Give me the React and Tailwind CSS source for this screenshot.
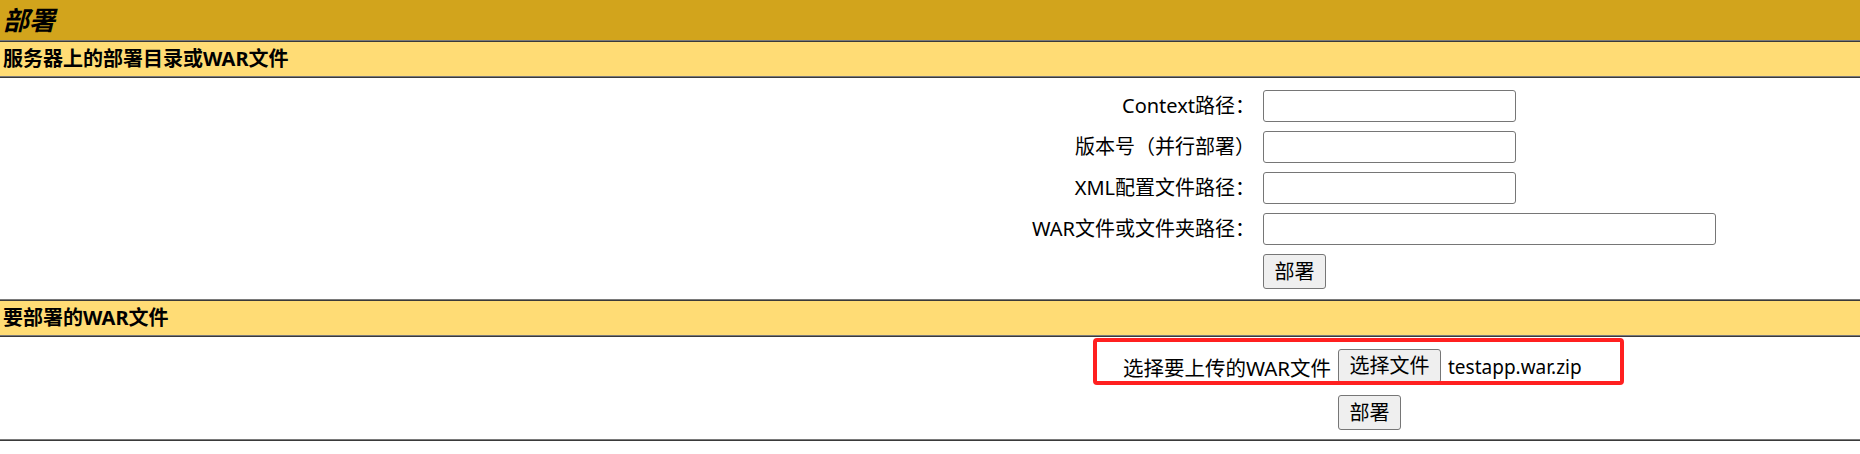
import React from "react";

const Line = () => (
  <div className="h-0 border-t border-b border-t-[#7a7a7a] border-b-[#3a3a3a]" />
);

const Input = ({ w }) => (
  <div
    className={`h-[32px] ${w} bg-white border border-[#767676] rounded-[3px]`}
  />
);

const Btn = ({ children, cls = "" }) => (
  <div
    className={`h-[35px] px-[4px] whitespace-nowrap flex items-center justify-center bg-[#efefef] border border-[#767676] rounded-[3px] text-[20px] leading-none ${cls}`}
  >
    {children}
  </div>
);

export default function App() {
  const labels = [
    ["Context路径：", "w-[253px]"],
    ["版本号（并行部署）", "w-[253px]"],
    ["XML配置文件路径：", "w-[253px]"],
    ["WAR文件或文件夹路径：", "w-[453px]"],
  ];
  return (
    <div className="w-[1860px] h-[454px] bg-white text-black font-['Noto_Sans','Noto_Sans_CJK_SC',sans-serif]">
      <div className="h-[40px] bg-[#D2A41C] flex items-center pl-[3px]">
        <span className="text-[26px] font-bold italic leading-none">部署</span>
      </div>
      <Line />
      <div className="h-[34px] bg-[#FFDC75] flex items-center pl-[3px]">
        <span className="text-[20px] font-bold leading-none">
          服务器上的部署目录或WAR文件
        </span>
      </div>
      <Line />
      <div className="pt-[12px] pb-[10px]">
        <div className="grid grid-cols-[1255px_auto] gap-x-[8px] gap-y-[9px] items-center">
          {labels.map(([t, w]) => (
            <React.Fragment key={t}>
              <div className="text-right text-[20px] leading-none">{t}</div>
              <div>
                <Input w={w} />
              </div>
            </React.Fragment>
          ))}
          <div />
          <div className="flex">
            <Btn cls="w-[63px]">部署</Btn>
          </div>
        </div>
      </div>
      <Line />
      <div className="h-[34px] bg-[#FFDC75] flex items-center pl-[3px]">
        <span className="text-[20px] font-bold leading-none">要部署的WAR文件</span>
      </div>
      <Line />
      <div className="relative pt-[12px] pb-[9px]">
        <div className="grid grid-cols-[1331px_auto] gap-x-[7px] gap-y-[12px] items-center">
          <div className="text-right text-[20.5px] leading-none pt-[4px]">
            选择要上传的WAR文件
          </div>
          <div className="flex items-center gap-[7px]">
            <div className="h-[34px] w-[103px] flex items-center justify-center bg-[#efefef] border border-[#767676] rounded-[3px] text-[20px] leading-none whitespace-nowrap">
              选择文件
            </div>
            <span className="text-[19px] leading-none pt-[2px]">testapp.war.zip</span>
          </div>
          <div />
          <div className="flex">
            <Btn cls="w-[63px]">部署</Btn>
          </div>
        </div>
        <div className="absolute left-[1093px] top-[1px] w-[531px] h-[47px] border-[4px] border-[#ff2020] rounded-[4px] pointer-events-none" />
      </div>
      <Line />
    </div>
  );
}
